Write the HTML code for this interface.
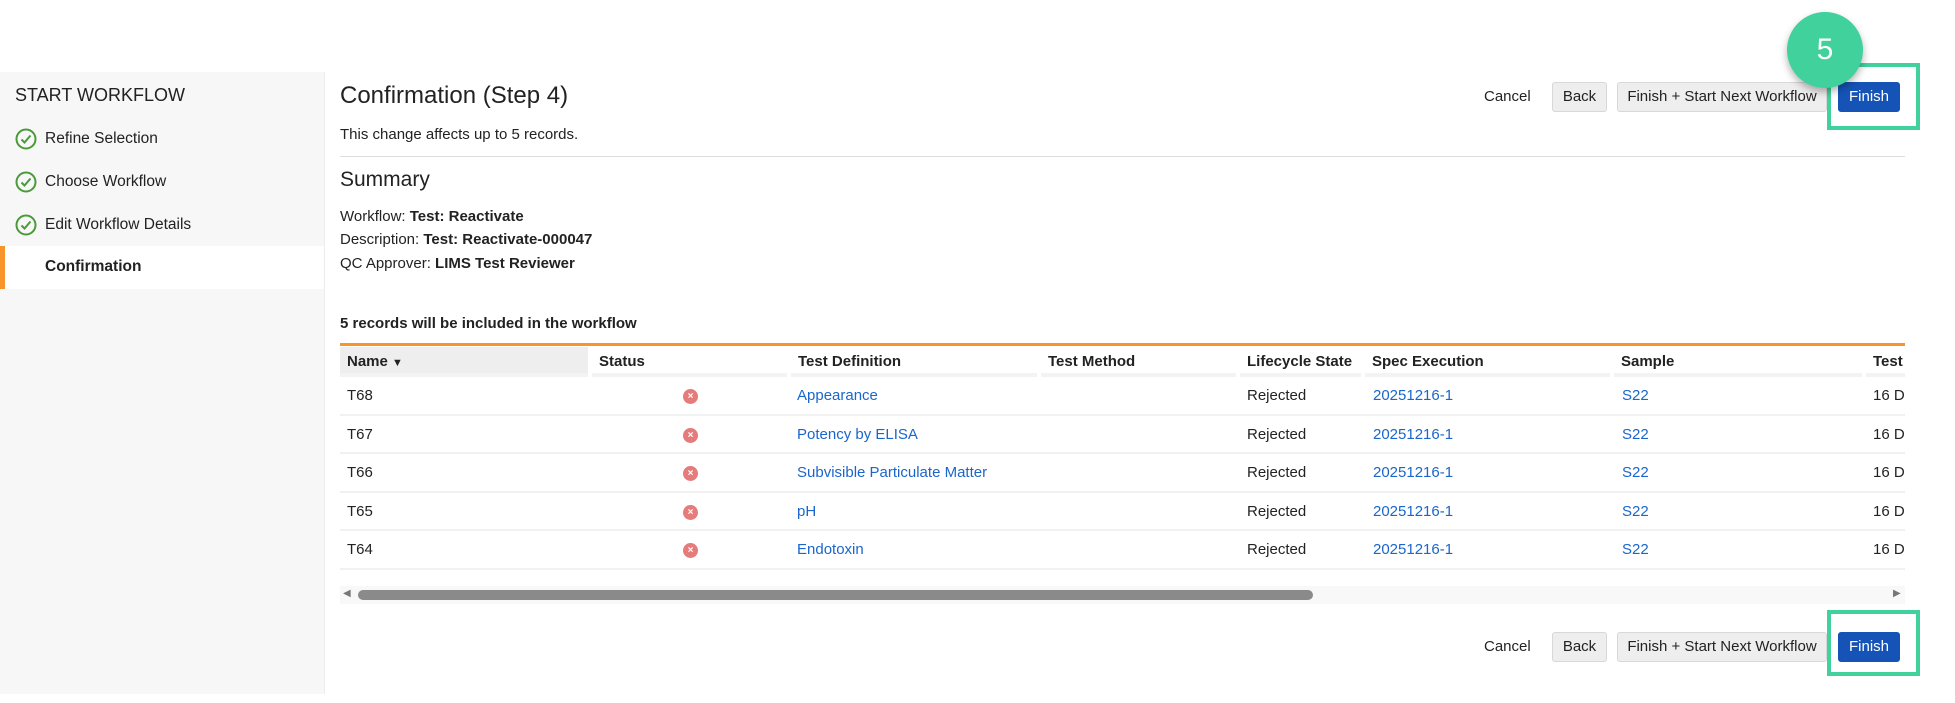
<!DOCTYPE html>
<html><head><meta charset="utf-8"><style>
*{box-sizing:border-box;margin:0;padding:0}
body{width:1955px;height:703px;background:#fff;font-family:"Liberation Sans",Arial,sans-serif;color:#222;position:relative;overflow:hidden;font-size:15px}
.abs{position:absolute;white-space:nowrap}
#side{position:absolute;left:0;top:72px;width:325px;height:622px;background:#f7f7f7;border-right:1px solid #ececec}
.chk{position:absolute;left:15px;width:22px;height:22px}
.btn{position:absolute;height:30px;border:1px solid #d8d8d8;background:#eee;border-radius:3px;font-size:15px;line-height:28px;text-align:center;color:#222;white-space:nowrap}
.fin{background:#1553b6;border-color:#1553b6;color:#fff}
.hl{position:absolute;border:4px solid #41d19c}
.hdr{position:absolute;top:347px;height:30px;font-weight:bold;line-height:29px;padding-left:7px;background:#fff;border-bottom:4px solid #f3f3f3;white-space:nowrap;overflow:hidden}
.row{position:absolute;left:340px;width:1565px;height:38.5px;border-bottom:2px solid #f1f1f1}
.c{position:absolute;line-height:38px;white-space:nowrap}
a{color:#1a66cc;text-decoration:none}
.x{position:absolute;width:15px;height:15px;border-radius:50%;background:#e57b7b;top:12px;left:343px;color:#fff;font-size:10px;line-height:15px;text-align:center;font-weight:bold}
</style></head><body>
<div id="side">
 <div class="abs" style="left:15px;top:13px;font-size:18px">START WORKFLOW</div>
 <svg class="chk" style="top:56px" viewBox="0 0 22 22"><circle cx="11" cy="11" r="9.5" fill="none" stroke="#4a9a3a" stroke-width="2"/><path d="M6.5 11.5l3 3 6-7" fill="none" stroke="#4a9a3a" stroke-width="2"/></svg>
 <div class="abs" style="left:45px;top:58px;font-size:15.5px">Refine Selection</div>
 <svg class="chk" style="top:99px" viewBox="0 0 22 22"><circle cx="11" cy="11" r="9.5" fill="none" stroke="#4a9a3a" stroke-width="2"/><path d="M6.5 11.5l3 3 6-7" fill="none" stroke="#4a9a3a" stroke-width="2"/></svg>
 <div class="abs" style="left:45px;top:101px;font-size:15.5px">Choose Workflow</div>
 <svg class="chk" style="top:142px" viewBox="0 0 22 22"><circle cx="11" cy="11" r="9.5" fill="none" stroke="#4a9a3a" stroke-width="2"/><path d="M6.5 11.5l3 3 6-7" fill="none" stroke="#4a9a3a" stroke-width="2"/></svg>
 <div class="abs" style="left:45px;top:144px;font-size:15.5px">Edit Workflow Details</div>
 <div style="position:absolute;left:0;top:174px;width:324px;height:43px;background:#fff;border-left:5px solid #f7952b"></div>
 <div class="abs" style="left:45px;top:186px;font-size:15.5px;font-weight:bold">Confirmation</div>
</div>

<div class="abs" style="left:340px;top:82px;font-size:24px">Confirmation (Step 4)</div>
<div class="abs" style="left:340px;top:126px">This change affects up to 5 records.</div>
<div style="position:absolute;left:340px;top:156px;width:1565px;height:1px;background:#ddd"></div>
<div class="abs" style="left:340px;top:168px;font-size:21px">Summary</div>
<div class="abs" style="left:340px;top:208px">Workflow: <b>Test: Reactivate</b></div>
<div class="abs" style="left:340px;top:231px">Description: <b>Test: Reactivate-000047</b></div>
<div class="abs" style="left:340px;top:255px">QC Approver: <b>LIMS Test Reviewer</b></div>
<div class="abs" style="left:340px;top:315px;font-weight:bold">5 records will be included in the workflow</div>

<div style="position:absolute;left:340px;top:343px;width:1565px;height:3px;background:#f7952b"></div>
<div class="hdr" style="left:340px;width:248px;background:#eee">Name <span style="font-size:11px">▼</span></div>
<div class="hdr" style="left:592px;width:195px">Status</div>
<div class="hdr" style="left:791px;width:246px">Test Definition</div>
<div class="hdr" style="left:1041px;width:195px">Test Method</div>
<div class="hdr" style="left:1240px;width:121px">Lifecycle State</div>
<div class="hdr" style="left:1365px;width:245px">Spec Execution</div>
<div class="hdr" style="left:1614px;width:248px">Sample</div>
<div class="hdr" style="left:1866px;width:39px">Test</div>

<div class="row" style="top:377px"><div class="c" style="left:7px">T68</div><div class="x">×</div><div class="c" style="left:457px"><a>Appearance</a></div><div class="c" style="left:907px">Rejected</div><div class="c" style="left:1033px"><a>20251216-1</a></div><div class="c" style="left:1282px"><a>S22</a></div><div class="c" style="left:1533px;width:32px;overflow:hidden">16 Dec</div></div>
<div class="row" style="top:415.5px"><div class="c" style="left:7px">T67</div><div class="x">×</div><div class="c" style="left:457px"><a>Potency by ELISA</a></div><div class="c" style="left:907px">Rejected</div><div class="c" style="left:1033px"><a>20251216-1</a></div><div class="c" style="left:1282px"><a>S22</a></div><div class="c" style="left:1533px;width:32px;overflow:hidden">16 Dec</div></div>
<div class="row" style="top:454px"><div class="c" style="left:7px">T66</div><div class="x">×</div><div class="c" style="left:457px"><a>Subvisible Particulate Matter</a></div><div class="c" style="left:907px">Rejected</div><div class="c" style="left:1033px"><a>20251216-1</a></div><div class="c" style="left:1282px"><a>S22</a></div><div class="c" style="left:1533px;width:32px;overflow:hidden">16 Dec</div></div>
<div class="row" style="top:492.5px"><div class="c" style="left:7px">T65</div><div class="x">×</div><div class="c" style="left:457px"><a>pH</a></div><div class="c" style="left:907px">Rejected</div><div class="c" style="left:1033px"><a>20251216-1</a></div><div class="c" style="left:1282px"><a>S22</a></div><div class="c" style="left:1533px;width:32px;overflow:hidden">16 Dec</div></div>
<div class="row" style="top:531px"><div class="c" style="left:7px">T64</div><div class="x">×</div><div class="c" style="left:457px"><a>Endotoxin</a></div><div class="c" style="left:907px">Rejected</div><div class="c" style="left:1033px"><a>20251216-1</a></div><div class="c" style="left:1282px"><a>S22</a></div><div class="c" style="left:1533px;width:32px;overflow:hidden">16 Dec</div></div>

<div style="position:absolute;left:340px;top:586px;width:1565px;height:18px;background:#f8f8f8"></div>
<div class="abs" style="left:343px;top:588px;font-size:10px;color:#777">◀</div>
<div class="abs" style="left:1893px;top:588px;font-size:10px;color:#777">▶</div>
<div style="position:absolute;left:358px;top:590px;width:955px;height:10px;border-radius:5px;background:#8a8a8a"></div>

<div class="abs" style="left:1484px;top:88px">Cancel</div>
<div class="btn" style="left:1552px;top:82px;width:55px">Back</div>
<div class="btn" style="left:1617px;top:82px;width:210px">Finish + Start Next Workflow</div>
<div class="btn fin" style="left:1838px;top:82px;width:62px">Finish</div>

<div class="abs" style="left:1484px;top:638px">Cancel</div>
<div class="btn" style="left:1552px;top:632px;width:55px">Back</div>
<div class="btn" style="left:1617px;top:632px;width:210px">Finish + Start Next Workflow</div>
<div class="btn fin" style="left:1838px;top:632px;width:62px">Finish</div>

<div class="hl" style="left:1827px;top:63px;width:93px;height:67px"></div>
<div class="hl" style="left:1827px;top:610px;width:93px;height:66px"></div>
<div style="position:absolute;left:1787px;top:12px;width:76px;height:76px;border-radius:50%;background:#40d19d;box-shadow:0 4px 8px rgba(0,0,0,.3);color:#fff;font-size:30px;line-height:76px;text-align:center">5</div>
</body></html>
